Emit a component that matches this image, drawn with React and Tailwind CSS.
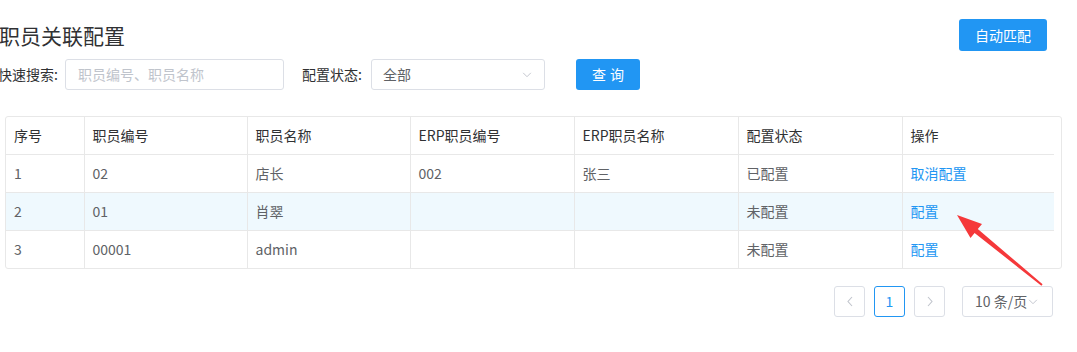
import React from "react";

const font = { fontFamily: '"Noto Sans CJK SC", "Noto Sans", sans-serif' };

const rows = [
  { no: "1", code: "02", name: "店长", erpCode: "002", erpName: "张三", status: "已配置", action: "取消配置" },
  { no: "2", code: "01", name: "肖翠", erpCode: "", erpName: "", status: "未配置", action: "配置", hl: true },
  { no: "3", code: "00001", name: "admin", erpCode: "", erpName: "", status: "未配置", action: "配置" },
];

const cols = [
  { key: "no", title: "序号", w: "w-[78px]" },
  { key: "code", title: "职员编号", w: "w-[163px]" },
  { key: "name", title: "职员名称", w: "w-[163px]" },
  { key: "erpCode", title: "ERP职员编号", w: "w-[164px]" },
  { key: "erpName", title: "ERP职员名称", w: "w-[164px]" },
  { key: "status", title: "配置状态", w: "w-[164px]" },
  { key: "action", title: "操作", w: "w-[152px]" },
];

function Chevron({ className, dir = "down" }) {
  const d = {
    down: "M1 1l4.5 4.5L10 1",
    left: "M5 1L1 5.5 5 10",
    right: "M1 1l4 4.5L1 10",
  }[dir];
  const box = dir === "down" ? "0 0 11 7" : "0 0 6 11";
  return (
    <svg viewBox={box} className={className} fill="none" stroke="currentColor" strokeWidth="1.1">
      <path d={d} />
    </svg>
  );
}

export default function App() {
  return (
    <div className="relative w-[1077px] h-[352px] bg-white overflow-hidden text-[14px]" style={font}>
      {/* header */}
      <div className="flex items-center justify-between pt-[19px] pr-[30px] h-[51px]">
        <h1 className="-ml-[1px] text-[21px] text-[#303133] font-normal leading-none">职员关联配置</h1>
        <button className="h-[32px] w-[88px] rounded-[3px] bg-[#2196f3] text-white text-[14px]">自动匹配</button>
      </div>

      {/* search */}
      <div className="mt-[8px] flex items-center h-[31px]">
        <span className="-ml-[2px] w-[67px] shrink-0 text-[#303133]">快速搜索:</span>
        <div className="w-[219px] h-[31px] shrink-0 rounded-[3px] border border-[#dcdfe6] flex items-center pl-[12px] text-[#c0c4cc]">
          职员编号、职员名称
        </div>
        <span className="ml-[18px] w-[69px] shrink-0 text-[#303133]">配置状态:</span>
        <div className="w-[174px] h-[31px] shrink-0 rounded-[3px] border border-[#dcdfe6] flex items-center justify-between pl-[11px] pr-[12px] text-[#606266]">
          <span>全部</span>
          <Chevron className="w-[10px] h-[6px] text-[#c0c4cc]" />
        </div>
        <button className="ml-[31px] w-[64px] h-[31px] shrink-0 rounded-[3px] bg-[#2196f3] text-white tracking-[4px] pl-[4px]">查询</button>
      </div>

      {/* table */}
      <div className="mt-[26px] ml-[5px] w-[1057px] pr-[8px] border border-[#e8e8e8] rounded-[3px]">
        <table className="border-collapse table-fixed w-[1047px]">
          <thead>
            <tr className="h-[37px] border-b border-[#e8e8e8]">
              {cols.map((c, i) => (
                <th
                  key={c.key}
                  className={`${c.w} text-left font-normal text-[#303133] pl-[8px] ${i < cols.length - 1 ? "border-r border-[#e8e8e8]" : ""}`}
                >
                  {c.title}
                </th>
              ))}
            </tr>
          </thead>
          <tbody>
            {rows.map((r, ri) => (
              <tr
                key={r.no}
                className={`h-[38px] ${ri < rows.length - 1 ? "border-b border-[#e8e8e8]" : ""} ${r.hl ? "bg-[#eff9fe]" : ""}`}
              >
                {cols.map((c, i) => (
                  <td
                    key={c.key}
                    className={`pl-[8px] ${c.key === "action" ? "text-[#2196f3]" : "text-[#606266]"} ${i < cols.length - 1 ? "border-r border-[#e8e8e8]" : ""}`}
                  >
                    {r[c.key]}
                  </td>
                ))}
              </tr>
            ))}
          </tbody>
        </table>
      </div>

      {/* pagination */}
      <div className="mt-[17px] flex justify-end items-center pr-[24px]">
        <div className="w-[31px] h-[31px] rounded-[3px] border border-[#dcdfe6] flex items-center justify-center text-[#c0c4cc]">
          <Chevron dir="left" className="w-[6px] h-[11px]" />
        </div>
        <div className="ml-[9px] w-[31px] h-[31px] rounded-[3px] border border-[#2196f3] flex items-center justify-center text-[#2196f3]">
          1
        </div>
        <div className="ml-[9px] w-[31px] h-[31px] rounded-[3px] border border-[#dcdfe6] flex items-center justify-center text-[#c0c4cc]">
          <Chevron dir="right" className="w-[6px] h-[11px]" />
        </div>
        <div className="ml-[17px] w-[91px] h-[31px] rounded-[3px] border border-[#dcdfe6] flex items-center pl-[12px] text-[#606266]">
          <span>10 条/页</span>
          <Chevron className="ml-[1px] w-[10px] h-[6px] text-[#c0c4cc]" />
        </div>
      </div>

      {/* annotation arrow */}
      <svg className="absolute left-0 top-0 pointer-events-none" width="1077" height="352">
        <polygon
          fill="#f5383a"
          points="957,215 982,224 977.8,229.1 1042.6,284.2 1041.4,285.8 974.6,232.9 970.5,238"
        />
      </svg>
    </div>
  );
}
